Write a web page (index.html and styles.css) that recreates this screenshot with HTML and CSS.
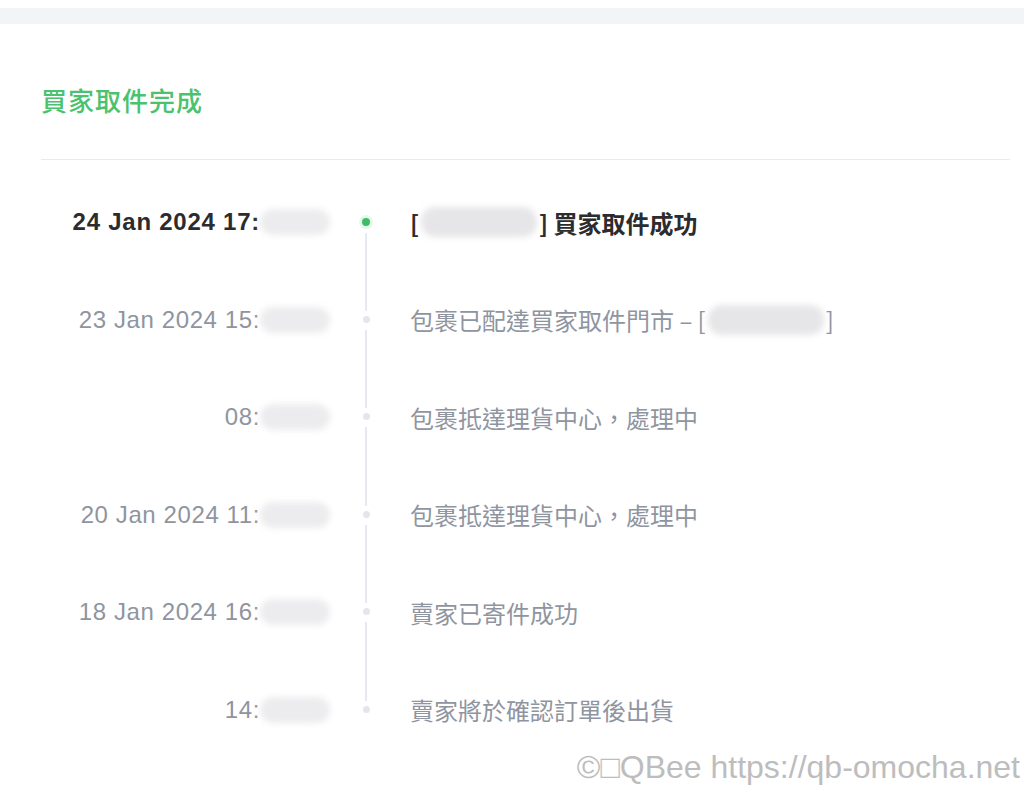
FILE: index.html
```html
<!DOCTYPE html>
<html lang="zh-Hant">
<head>
  <meta charset="UTF-8">
  <title>物流資訊</title>
  <link rel="stylesheet" href="styles.css">
</head>
<body>
  <!-- 上方灰條 -->
  <div class="top-strip"></div>

  <div class="card">
    <!-- 狀態標題 -->
    <div class="status-title">買家取件完成</div>

    <!-- 物流時間軸 -->
    <div class="timeline">
      <div class="row current">
        <div class="time">24 Jan 2024 17:<span class="blur"></span></div>
        <div class="rail"><span class="dot"></span><span class="line"></span></div>
        <div class="desc">[<span class="blur wide"></span>] 買家取件成功</div>
      </div>
      <div class="row">
        <div class="time">23 Jan 2024 15:<span class="blur"></span></div>
        <div class="rail"><span class="dot"></span><span class="line"></span></div>
        <div class="desc">包裹已配達買家取件門市 – [<span class="blur wide"></span>]</div>
      </div>
      <div class="row">
        <div class="time">08:<span class="blur"></span></div>
        <div class="rail"><span class="dot"></span><span class="line"></span></div>
        <div class="desc">包裹抵達理貨中心，處理中</div>
      </div>
      <div class="row">
        <div class="time">20 Jan 2024 11:<span class="blur"></span></div>
        <div class="rail"><span class="dot"></span><span class="line"></span></div>
        <div class="desc">包裹抵達理貨中心，處理中</div>
      </div>
      <div class="row">
        <div class="time">18 Jan 2024 16:<span class="blur"></span></div>
        <div class="rail"><span class="dot"></span><span class="line"></span></div>
        <div class="desc">賣家已寄件成功</div>
      </div>
      <div class="row last">
        <div class="time">14:<span class="blur"></span></div>
        <div class="rail"><span class="dot"></span></div>
        <div class="desc">賣家將於確認訂單後出貨</div>
      </div>
    </div>
  </div>

  <!-- 浮水印 -->
  <div class="watermark">©□QBee https://qb-omocha.net</div>
</body>
</html>
```

FILE: styles.css
```css
body {
  margin: 0;
  padding: 0;
  background: #fff;
  font-family: 'Liberation Sans', 'Noto Sans CJK TC', sans-serif;
  position: relative;
  height: 788px;
  overflow: hidden;
}

/* 上方灰條 */
.top-strip {
  margin-top: 8px;
  height: 16px;
  background: #f3f4f7;
}

/* 卡片 */
.card {
  margin: 0 14px 0 41px;
}

.status-title {
  margin-top: 58px;
  height: 36px;
  line-height: 36px;
  font-family: 'Noto Sans CJK TC', sans-serif;
  font-size: 26px;
  font-weight: 500;
  color: #4bc26d;
  letter-spacing: 1px;
}

.timeline {
  margin-top: 41px;
  border-top: 1px solid #e9eaee;
  padding-top: 47px;
}

/* 每一列 */
.row {
  display: grid;
  grid-template-columns: 289px 72px 1fr;
  height: 97.6px;
}

.time {
  display: flex;
  justify-content: flex-end;
  align-items: center;
  height: 30px;
  font-size: 24px;
  letter-spacing: 0.6px;
  color: #8f959f;
  white-space: nowrap;
}

.desc {
  display: flex;
  align-items: center;
  height: 30px;
  padding-left: 8px;
  font-family: 'Noto Sans CJK TC', sans-serif;
  font-size: 24px;
  color: #8f95a0;
  white-space: nowrap;
}

.row.current .time {
  font-weight: bold;
  color: #2c2c2e;
  letter-spacing: 0.75px;
}

.row.current .desc {
  font-weight: bold;
  color: #2c2c2e;
}

/* 模糊遮蓋 */
.blur {
  display: inline-block;
  width: 70px;
  height: 26px;
  border-radius: 14px;
  background: #ececee;
  filter: blur(3px);
}

.blur.wide {
  width: 116px;
  height: 30px;
  margin: 0 2px;
  background: #e6e6e8;
}

/* 時間軸線與點 */
.rail {
  display: flex;
  flex-direction: column;
  align-items: center;
}

.dot {
  width: 7px;
  height: 7px;
  margin-top: 11px;
  border-radius: 50%;
  background: #e3e6ec;
  flex-shrink: 0;
}

.row.current .dot {
  width: 8px;
  height: 8px;
  background: #3dbf66;
  box-shadow: 0 0 0 3px rgba(61, 191, 102, 0.12);
}

.line {
  flex: 1;
  width: 2px;
  margin: 7px 0 -6px;
  background: #e6e9f0;
}

/* 浮水印 */
.watermark {
  position: absolute;
  right: 4px;
  top: 749px;
  font-family: 'Liberation Sans', 'DejaVu Sans', sans-serif;
  font-size: 32px;
  color: #bdbdbd;
  white-space: nowrap;
}
```
